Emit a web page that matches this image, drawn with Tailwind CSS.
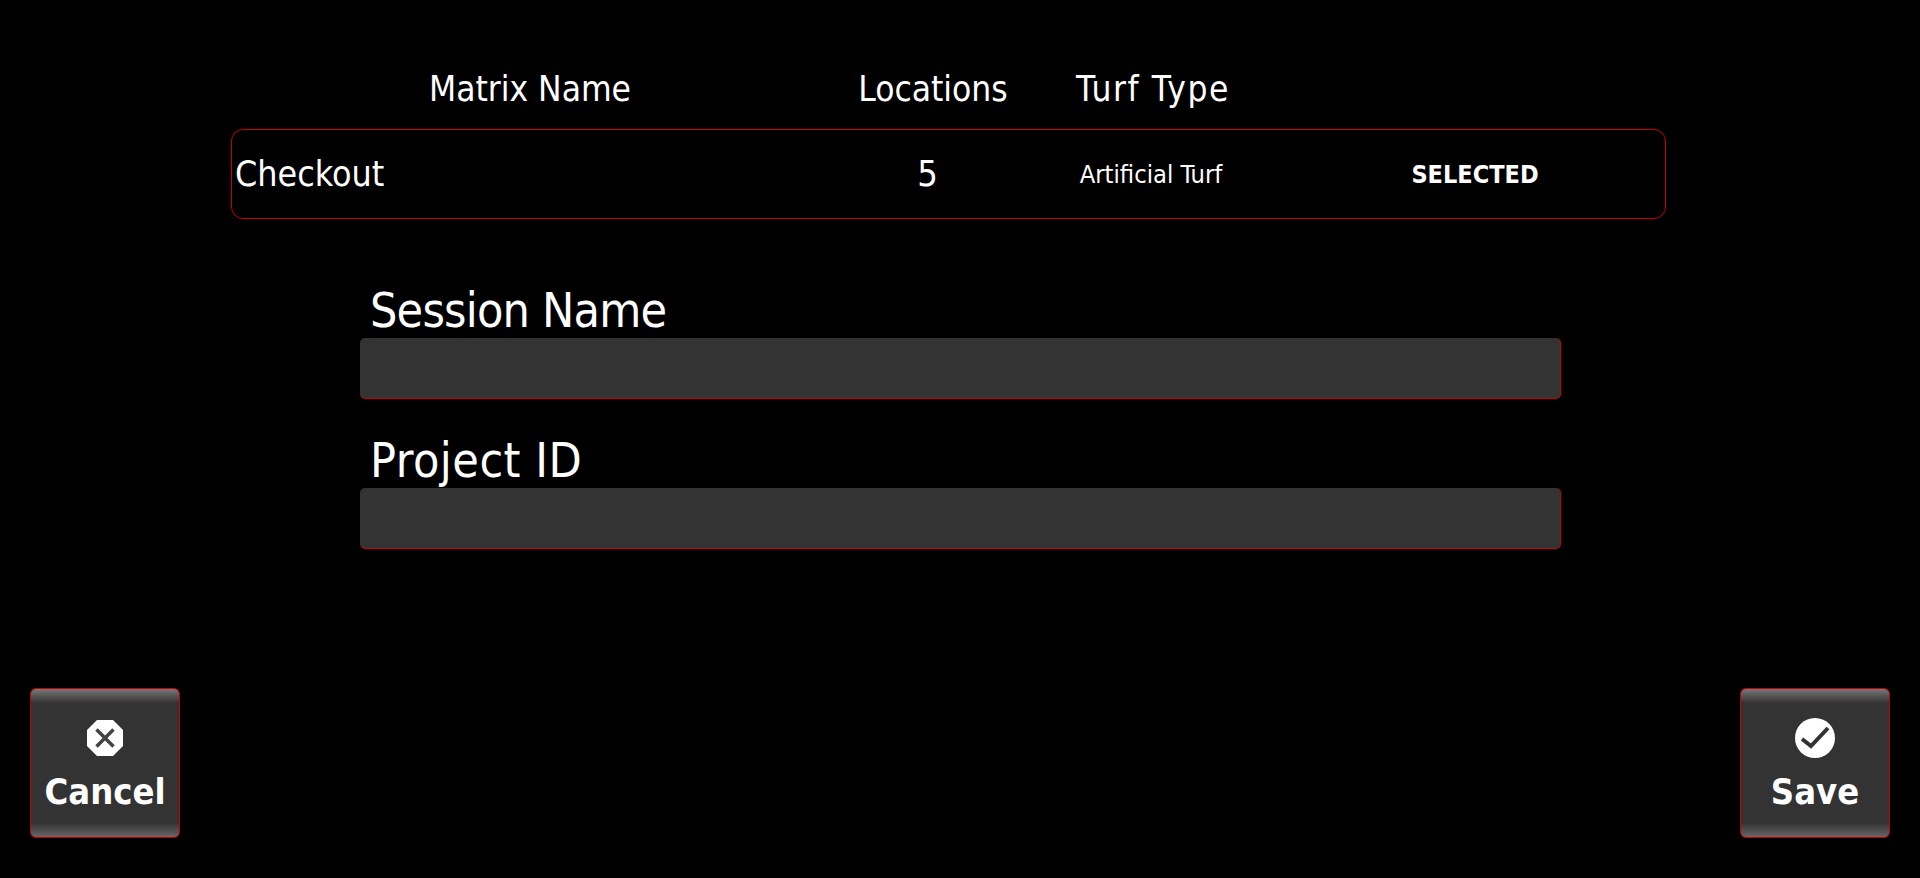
<!DOCTYPE html>
<html><head><meta charset="utf-8"><title>Session</title>
<script src="https://cdn.jsdelivr.net/npm/@tailwindcss/browser@4"></script></head>
<body class="bg-black">
<div class="h-[878px] w-[1920px] overflow-hidden flex flex-col text-white font-['DejaVu_Sans_Condensed','DejaVu_Sans',sans-serif]">
  <div class="ml-[231px] w-[1435px] mt-[69px] h-[40px] grid grid-cols-[598px_208px_232px_1fr] items-center text-[35px] leading-[40px] text-center">
    <div>Matrix Name</div><div>Locations</div><div class="tracking-[1.6px]">Turf Type</div><div></div>
  </div>
  <div class="ml-[231px] w-[1435px] mt-[20px] h-[90px] grid grid-cols-[598px_208px_232px_1fr] items-center border border-[#c80000] rounded-[12px]">
    <div class="pl-[3px] text-[35.5px]">Checkout</div>
    <div class="text-center pr-[13px] text-[36px]">5</div>
    <div class="text-center pr-[6px] pt-[1px] text-[25.3px]">Artificial Turf</div>
    <div class="text-center pl-[15px] pt-[2px] text-[25px] font-bold">SELECTED</div>
  </div>
  <div class="ml-[360px] w-[1201px] mt-[65px] flex flex-col gap-[35px]">
    <div>
      <div class="pl-[10px] h-[54px] text-[48px] leading-[52px] tracking-[-0.8px]">Session Name</div>
      <div class="h-[61px] bg-[#333] rounded-[5px] border-r border-b border-[#d00000]"></div>
    </div>
    <div>
      <div class="pl-[10px] h-[54px] text-[48px] leading-[52px] tracking-[0.5px]">Project ID</div>
      <div class="h-[61px] bg-[#333] rounded-[5px] border-r border-b border-[#d00000]"></div>
    </div>
  </div>
  <div class="mx-[30px] mt-[139px] flex justify-between">
    <button class="w-[150px] h-[150px] rounded-[6px] border border-[#c80000] bg-[linear-gradient(#777,#333_14px,#333_calc(100%-14px),#666)] flex flex-col items-center pt-[30px] text-[36px] font-bold leading-[44px]">
      <svg class="w-[38px] h-[38px]" viewBox="0 0 38 38" aria-hidden="true"><path d="M11 1h16l10 10v16L27 37H11L1 27V11z" fill="#fff"/><path d="M10.500 10.500l17 17M27.500 10.500l-17 17" stroke="#444" stroke-width="3.500" fill="none"/></svg>
      <span class="mt-[13px]">Cancel</span>
    </button>
    <button class="w-[150px] h-[150px] rounded-[6px] border border-[#c80000] bg-[linear-gradient(#777,#333_14px,#333_calc(100%-14px),#666)] flex flex-col items-center pt-[29px] text-[36px] font-bold leading-[44px]">
      <svg class="w-[40px] h-[40px]" viewBox="0 0 40 40" aria-hidden="true"><circle cx="20" cy="20" r="20" fill="#fff"/><path d="M7 21l9 7L33 10" stroke="#333" stroke-width="4" fill="none"/></svg>
      <span class="mt-[12px]">Save</span>
    </button>
  </div>
</div>
</body></html>
